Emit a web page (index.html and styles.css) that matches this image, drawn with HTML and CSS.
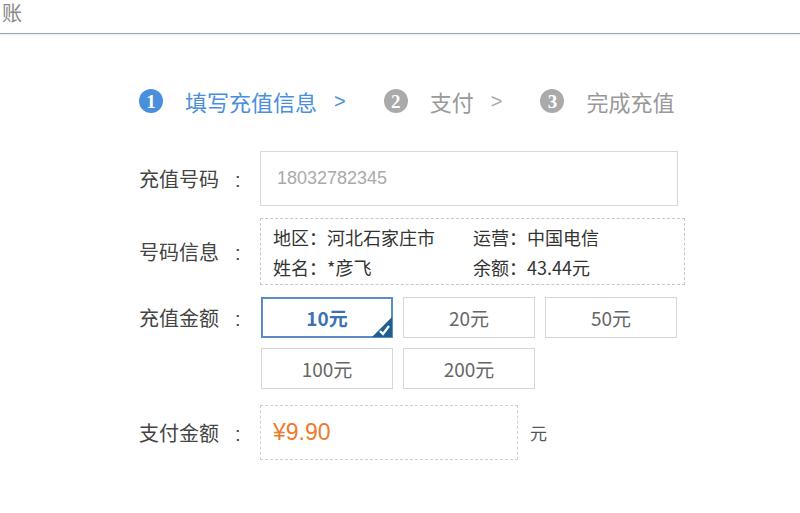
FILE: index.html
```html
<!DOCTYPE html>
<html lang="zh-CN">
<head>
  <meta charset="UTF-8">
  <title>充值</title>
  <link rel="stylesheet" href="styles.css">
</head>
<body>

  <header class="topbar">
    <span class="topbar-title">账</span>
  </header>

  <main class="recharge">
    <div class="steps">
      <div class="step active"><span class="step-num">1</span><span class="step-text">填写充值信息</span></div>
      <span class="step-arrow">&gt;</span>
      <div class="step"><span class="step-num">2</span><span class="step-text">支付</span></div>
      <span class="step-arrow">&gt;</span>
      <div class="step"><span class="step-num">3</span><span class="step-text">完成充值</span></div>
    </div>

    <div class="form-row">
      <label class="form-label">充值号码<span class="colon">:</span></label>
      <div class="phone-input">18032782345</div>
    </div>

    <div class="form-row">
      <label class="form-label">号码信息<span class="colon">:</span></label>
      <div class="info-box">
        <span class="info-item">地区：河北石家庄市</span>
        <span class="info-item">运营：中国电信</span>
        <span class="info-item">姓名：*彦飞</span>
        <span class="info-item">余额：43.44元</span>
      </div>
    </div>

    <div class="form-row top">
      <label class="form-label amount-label">充值金额<span class="colon">:</span></label>
      <div class="amounts">
        <div class="amount selected">10元
          <svg class="amount-check" width="20" height="20" viewBox="0 0 20 20">
            <polygon points="20,0 20,20 0,20" fill="#1f5f8f"/>
            <path d="M8 14 L11 17 L17 9" stroke="#fff" stroke-width="2.2" fill="none"/>
          </svg>
        </div>
        <div class="amount">20元</div>
        <div class="amount">50元</div>
        <div class="amount">100元</div>
        <div class="amount">200元</div>
      </div>
    </div>

    <div class="form-row">
      <label class="form-label">支付金额<span class="colon">:</span></label>
      <div class="pay-box">¥9.90</div>
      <span class="pay-unit">元</span>
    </div>
  </main>

</body>
</html>
```

FILE: styles.css
```css
html, body {
  margin: 0;
  background-color: #fff;
  font-family: "Microsoft YaHei", "Noto Sans CJK SC", "Liberation Sans", sans-serif;
  color: #444;
}

.topbar {
  height: 33px;
  border-bottom: 1px solid #8fa8bb;
  box-shadow: 0 1px 2px rgba(140,170,200,0.25);
}

.topbar-title {
  display: block;
  padding-left: 2px;
  font-size: 20px;
  line-height: 26px;
  color: #888;
}

.recharge {
  padding: 54px 0 0 139px;
}

.steps {
  display: flex;
  align-items: center;
  height: 26px;
  margin-bottom: 37px;
}

.step {
  display: flex;
  align-items: center;
  color: #999;
}

.step-num {
  width: 24px;
  height: 24px;
  border-radius: 50%;
  background-color: #aaa;
  color: #fff;
  font-family: "Liberation Serif", serif;
  font-size: 19px;
  font-weight: bold;
  line-height: 25px;
  text-align: center;
  margin-right: 22px;
}

.step-text {
  font-size: 22px;
  line-height: 26px;
}

.step.active {
  color: #4a8fdc;
}

.step.active .step-num {
  background-color: #4a8fdc;
}

.step-arrow {
  font-family: "Liberation Sans", sans-serif;
  font-size: 20px;
  color: #aaa;
  margin: 0 38px 0 17px;
}

.step.active + .step-arrow {
  color: #4a8fdc;
}

.form-row {
  display: flex;
  align-items: center;
  margin-bottom: 12px;
}

.form-row.top {
  align-items: flex-start;
  margin-bottom: 16px;
}

.form-label {
  width: 121px;
  flex: none;
  font-size: 20px;
  color: #444;
}

.colon {
  margin-left: 16px;
  font-family: "Liberation Sans", sans-serif;
}

.amount-label {
  line-height: 41px;
}

.phone-input {
  width: 400px;
  height: 53px;
  border: 1px solid #d9d9d9;
  padding-left: 16px;
  font-family: "Liberation Sans", sans-serif;
  font-size: 18px;
  line-height: 53px;
  color: #aaa;
}

.info-box {
  width: 411px;
  height: 65px;
  border: 1px dashed #c8c8c8;
  padding: 0 0 0 12px;
  display: grid;
  grid-template-columns: 200px 200px;
  align-content: center;
  font-size: 18px;
  line-height: 30px;
  color: #333;
}

.amounts {
  display: grid;
  grid-template-columns: repeat(3, 132px);
  gap: 10px;
  margin-left: 1px;
}

.amount {
  position: relative;
  height: 39px;
  border: 1px solid #d6d6d6;
  text-align: center;
  font-size: 19px;
  line-height: 39px;
  color: #666;
}

.amount.selected {
  border: 2px solid #5b8cc8;
  height: 37px;
  line-height: 37px;
  color: #3c72b4;
  font-weight: bold;
}

.amount-check {
  position: absolute;
  right: -1px;
  bottom: -1px;
}

.pay-box {
  width: 244px;
  height: 53px;
  border: 1px dashed #d0d0d0;
  padding-left: 12px;
  font-family: "Liberation Sans", sans-serif;
  font-size: 23px;
  line-height: 53px;
  color: #ee7a2e;
}

.pay-unit {
  margin-left: 12px;
  font-size: 17px;
  color: #555;
}
```
